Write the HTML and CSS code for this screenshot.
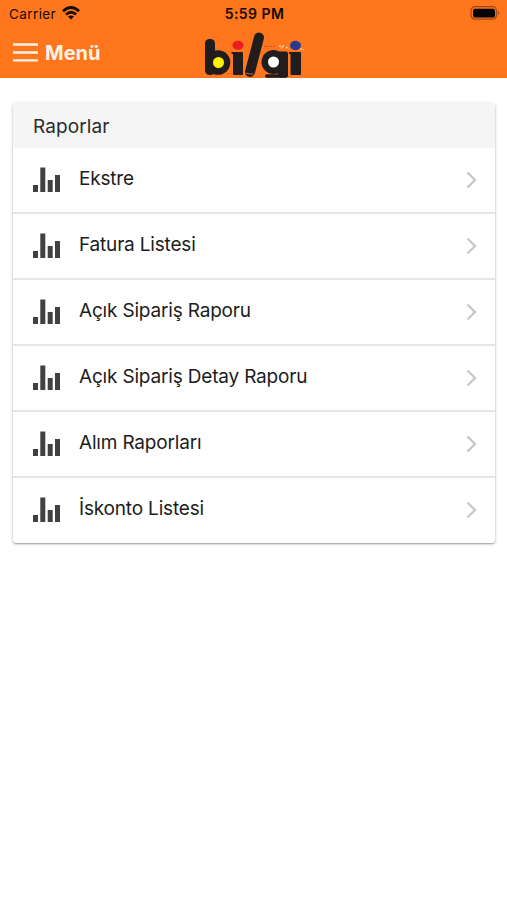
FILE: index.html
```html
<!DOCTYPE html>
<html lang="tr">
<head>
<meta charset="utf-8">
<title>Raporlar</title>
<link rel="stylesheet" href="styles.css">
</head>
<body>
<svg width="0" height="0" class="defs">
  <symbol id="bars" viewBox="0 0 28 26"><path d="M0 18h5v7H0zM7.300 .5h5V25h-5zM14.700 13h5v12h-5zM22 8h5v17h-5z" fill="#414141"/></symbol>
  <symbol id="chevron" viewBox="0 0 11 18"><path d="M1.500 1.500L9 9l-7.500 7.500" fill="none" stroke="#c8c8c8" stroke-width="2.400"/></symbol>
</svg>
<header class="top">
  <div class="status">
    <span class="carrier">Carrier
      <svg class="wifi" width="18" height="14" viewBox="0 0 18 14" fill="none" stroke="#160a02" stroke-width="2.700"><path d="M1 5.200Q9-2.200 17 5.200M3.900 8.500Q9 4 14.100 8.500"/><path d="M6 10.600Q9 8.200 12 10.600L9 13.600z" fill="#160a02" stroke="none"/></svg>
    </span>
    <span class="time">5:59 PM</span>
    <svg class="battery" width="30" height="14" viewBox="0 0 30 14"><rect x="1" y=".7" width="25.500" height="12.500" rx="4" fill="none" stroke="#9c4711" stroke-width="1.200"/><rect x="3" y="2.700" width="22" height="8.800" rx="2" fill="#000"/><path d="M28 4.800q2.500 2.100 0 4.200z" fill="#9c4711"/></svg>
  </div>
  <div class="nav">
    <svg width="25" height="19" viewBox="0 0 25 19"><path d="M0 1.500h25M0 9.500h25M0 17.300h25" stroke="#fff2e6" stroke-width="2.300"/></svg>
    <span class="menu">Menü</span>
  </div>
  <svg class="logo" width="104" height="48" viewBox="0 0 104 48">
    <g fill="#211c1d">
      <rect x="3" y="9" width="10" height="36" rx="4.500"/>
      <circle cx="16" cy="32.500" r="12.300"/>
      <rect x="31" y="22" width="10" height="23" rx="1"/>
      <circle cx="71.500" cy="32" r="12"/>
      <rect x="76" y="21.500" width="10" height="26" rx="2"/>
      <rect x="63" y="44.300" width="22" height="3.500" rx="1.700"/>
      <rect x="88.500" y="22" width="10.500" height="23" rx="1"/>
    </g>
    <path d="M29.500 23h3M87 23h3" stroke="#211c1d" stroke-width="2"/>
    <path d="M57 7.500L48 42" stroke="#211c1d" stroke-width="10" stroke-linecap="round"/>
    <path d="M43.500 43l4 1 4 0" stroke="#d9824a" stroke-width=".8" fill="none"/>
    <path d="M62 16.500h12" stroke="#bd5c22" stroke-width="1" stroke-dasharray="2 1"/>
    <path d="M77 16h6M79 18.500l3-3M84 17l3 2M98 19l4 1" stroke="#f2d0b5" stroke-width="1.300" stroke-dasharray="2 1"/>
    <circle cx="16.500" cy="32.500" r="5.500" fill="#fff200"/>
    <circle cx="71.500" cy="32" r="5.500" fill="#fff"/>
    <ellipse cx="36" cy="15.200" rx="5.500" ry="4.500" fill="#ed1c24"/>
    <ellipse cx="93.500" cy="15.500" rx="5.500" ry="4.700" fill="#2b3990"/>
  </svg>
</header>
<main class="card">
  <h1 class="title">Raporlar</h1>
  <a class="row"><svg class="icon"><use href="#bars"/></svg><span>Ekstre</span><svg class="go"><use href="#chevron"/></svg></a>
  <a class="row"><svg class="icon"><use href="#bars"/></svg><span>Fatura Listesi</span><svg class="go"><use href="#chevron"/></svg></a>
  <a class="row"><svg class="icon"><use href="#bars"/></svg><span>Açık Sipariş Raporu</span><svg class="go"><use href="#chevron"/></svg></a>
  <a class="row"><svg class="icon"><use href="#bars"/></svg><span>Açık Sipariş Detay Raporu</span><svg class="go"><use href="#chevron"/></svg></a>
  <a class="row"><svg class="icon"><use href="#bars"/></svg><span>Alım Raporları</span><svg class="go"><use href="#chevron"/></svg></a>
  <a class="row"><svg class="icon"><use href="#bars"/></svg><span>İskonto Listesi</span><svg class="go"><use href="#chevron"/></svg></a>
</main>
</body>
</html>
```
FILE: styles.css
```css
* { box-sizing: border-box; }
body { margin: 0; min-height: 100vh; background: #fff; font-family: Inter, "Liberation Sans", sans-serif; color: #1c1c1c; }
.defs { position: absolute; }
.top { position: relative; height: 78px; background: #ff761c; }
.status { display: grid; grid-template-columns: 1fr auto 1fr; align-items: center; height: 27px; padding: 0 7px 0 9px; font-size: 13.5px; color: #160a02; }
.carrier { display: flex; align-items: center; gap: 6px; letter-spacing: .4px; }
.wifi { margin-top: -2px; }
.time { font-weight: 600; font-size: 14px; letter-spacing: .45px; }
.battery { justify-self: end; margin-top: -1px; }
.nav { display: flex; align-items: center; gap: 7px; height: 51px; padding-left: 13px; }
.menu { font-size: 20px; font-weight: 700; color: #fff2e6; }
.logo { position: absolute; left: 202px; top: 30px; }
.card { margin: 25px 12px 0 13px; border-radius: 3px; background: #fff; box-shadow: 0 1px 3px rgba(0,0,0,.3), 0 1px 1px rgba(0,0,0,.15); }
.title { margin: 0; height: 45px; padding-left: 20px; line-height: 47px; font-size: 19px; font-weight: 400; letter-spacing: .1px; border-radius: 3px 3px 0 0; background: #f5f5f5; color: #2b2b2b; }
.row { display: flex; align-items: center; height: 66px; padding: 0 18px 0 20px; border-bottom: 2px solid #e6e6e6; font-size: 19px; letter-spacing: -.18px; }
.row:last-child { border-bottom: 0; height: 65px; padding-bottom: 2px; }
.row span { flex: 1; margin-left: 18px; padding-bottom: 4px; }
.row:last-child span { padding-bottom: 3px; }
.icon { width: 28px; height: 26px; }
.go { width: 11px; height: 18px; }
```
